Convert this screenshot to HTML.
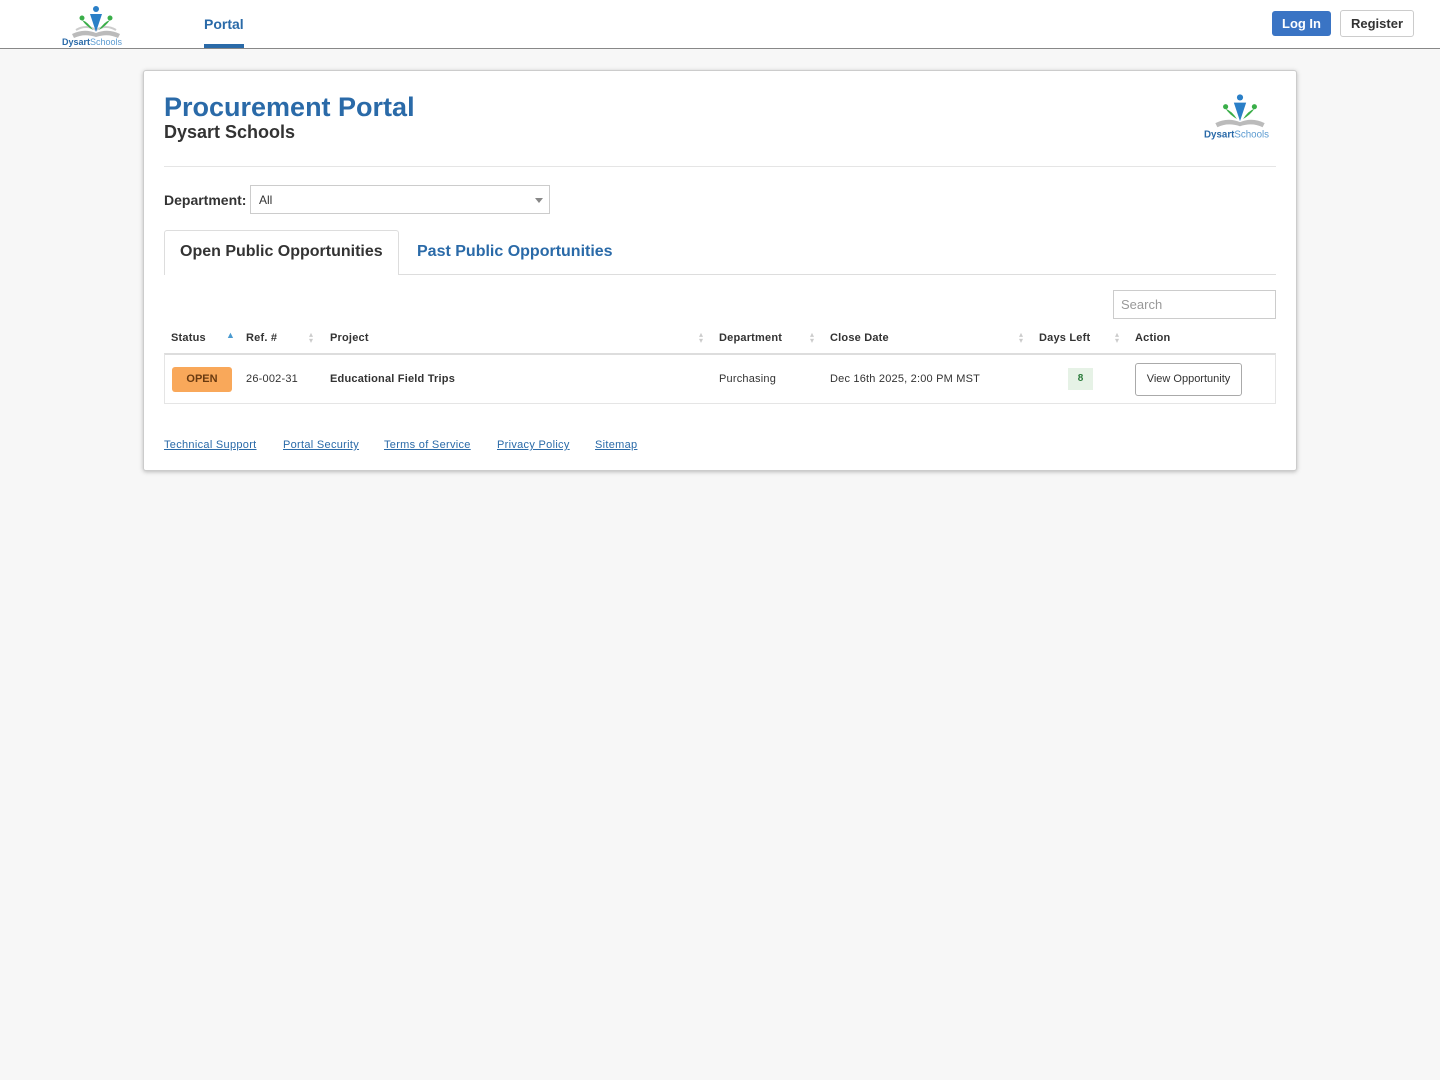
<!DOCTYPE html>
<html><head><meta charset="utf-8"><style>
*{box-sizing:border-box}
body{margin:0;background:#f7f7f7;font-family:"Liberation Sans",sans-serif;color:#333;width:1440px;height:1080px;position:relative;overflow:hidden}
.top{position:absolute;left:0;top:0;width:1440px;height:49px;background:#fff;border-bottom:1px solid #888}
.abs{position:absolute}
.card{position:absolute;left:143px;top:70px;width:1154px;height:401px;background:#fff;border:1px solid #ccc;border-radius:3px;box-shadow:0 1px 4px rgba(0,0,0,.25)}
.th{position:absolute;top:332px;font-size:11px;font-weight:bold;color:#333;letter-spacing:.2px}
.td{position:absolute;top:373px;font-size:11px;color:#333;letter-spacing:.2px}
.sort{position:absolute;top:332px;font-size:8px;color:#ccc;line-height:6px}
.ft{position:absolute;top:439px;font-size:11px;color:#2a6aa8;text-decoration:underline;letter-spacing:.3px}
</style></head><body>
<div class="top"></div>
<svg class="abs" style="left:60px;top:0" width="72" height="48" viewBox="0 0 72 48">
<path d="M12 34 Q24 28 36 33 Q48 28 60 34 L58 38 Q48 33 36 37 Q24 33 14 38Z" fill="#bbb"/>
<path d="M16 30 Q26 24 36 30 Q46 24 56 30" stroke="#ccc" stroke-width="2" fill="none"/>
<path d="M30 14 L36 32 L42 14 Z" fill="#2a7fc7"/>
<circle cx="36" cy="9" r="3" fill="#2a7fc7"/>
<path d="M22 20 Q28 22 33 30 Q26 26 22 20Z" fill="#3aae49"/><circle cx="22" cy="18" r="2.5" fill="#3aae49"/>
<path d="M50 20 Q44 22 39 30 Q46 26 50 20Z" fill="#3aae49"/><circle cx="50" cy="18" r="2.5" fill="#3aae49"/>
<text x="2" y="45" font-family="Liberation Sans" font-size="9" font-weight="bold" fill="#2a6aa8">Dysart<tspan font-weight="normal" fill="#5a9ad0">Schools</tspan></text>
</svg>
<div class="abs" style="left:204px;top:16px;font-size:14px;font-weight:bold;color:#2a6aa8">Portal</div>
<div class="abs" style="left:204px;top:44px;width:40px;height:4px;background:#2a6aa8"></div>
<div class="abs" style="left:1272px;top:11px;width:59px;height:25px;background:#3a74c4;border-radius:3px;color:#fff;font-size:13px;font-weight:bold;text-align:center;line-height:25px">Log In</div>
<div class="abs" style="left:1340px;top:10px;width:74px;height:27px;background:#fff;border:1px solid #ccc;border-radius:3px;color:#333;font-size:13px;font-weight:bold;text-align:center;line-height:25px">Register</div>

<div class="card"></div>
<div class="abs" style="left:164px;top:92px;font-size:27px;font-weight:bold;color:#2a6aa8">Procurement Portal</div>
<div class="abs" style="left:164px;top:122px;font-size:18px;font-weight:bold;color:#333">Dysart Schools</div>
<svg class="abs" style="left:1203px;top:90px" width="74" height="54" viewBox="0 0 72 48">
<path d="M12 30 Q24 24 36 29 Q48 24 60 30 L58 34 Q48 29 36 33 Q24 29 14 34Z" fill="#bbb"/>
<path d="M30 10 L36 28 L42 10 Z" fill="#2a7fc7"/>
<circle cx="36" cy="5" r="3" fill="#2a7fc7"/>
<path d="M22 16 Q28 18 33 26 Q26 22 22 16Z" fill="#3aae49"/><circle cx="22" cy="14" r="2.5" fill="#3aae49"/>
<path d="M50 16 Q44 18 39 26 Q46 22 50 16Z" fill="#3aae49"/><circle cx="50" cy="14" r="2.5" fill="#3aae49"/>
<text x="1" y="44" font-family="Liberation Sans" font-size="9.5" font-weight="bold" fill="#2a6aa8">Dysart<tspan font-weight="normal" fill="#5a9ad0">Schools</tspan></text>
</svg>
<div class="abs" style="left:164px;top:166px;width:1112px;height:1px;background:#e5e5e5"></div>
<div class="abs" style="left:164px;top:192px;font-size:14px;font-weight:bold;color:#333">Department:</div>
<div class="abs" style="left:250px;top:185px;width:300px;height:29px;border:1px solid #ccc;background:#fff;font-size:12px;padding:7px 8px">All</div>
<div class="abs" style="left:535px;top:198px;border-left:4px solid transparent;border-right:4px solid transparent;border-top:5px solid #888"></div>

<div class="abs" style="left:164px;top:274px;width:1112px;height:1px;background:#ddd"></div>
<div class="abs" style="left:164px;top:230px;width:235px;height:45px;background:#fff;border:1px solid #ddd;border-bottom:none;border-radius:3px 3px 0 0;font-size:16px;font-weight:bold;color:#333;padding:12px 0 0 15px">Open Public Opportunities</div>
<div class="abs" style="left:417px;top:243px;font-size:16px;font-weight:bold;color:#2a6aa8">Past Public Opportunities</div>

<div class="abs" style="left:1113px;top:290px;width:163px;height:29px;border:1px solid #ccc;font-size:13px;color:#999;padding:6px 7px">Search</div>

<div class="th" style="left:171px">Status</div><div class="abs" style="left:226px;top:330px;font-size:9px;color:#4a9ad0">▲</div>
<div class="th" style="left:246px">Ref. #</div><div class="sort" style="left:309px">▴<br>▾</div>
<div class="th" style="left:330px">Project</div><div class="sort" style="left:699px">▴<br>▾</div>
<div class="th" style="left:719px">Department</div><div class="sort" style="left:810px">▴<br>▾</div>
<div class="th" style="left:830px">Close Date</div><div class="sort" style="left:1019px">▴<br>▾</div>
<div class="th" style="left:1039px">Days Left</div><div class="sort" style="left:1115px">▴<br>▾</div>
<div class="th" style="left:1135px">Action</div>
<div class="abs" style="left:164px;top:353px;width:1112px;height:51px;border:1px solid #e5e5e5;border-top:2px solid #ddd"></div>
<div class="abs" style="left:172px;top:367px;width:60px;height:25px;background:#f9a85a;border-radius:3px;font-size:11px;font-weight:bold;color:#6a3a10;text-align:center;line-height:25px">OPEN</div>
<div class="td" style="left:246px">26-002-31</div>
<div class="td" style="left:330px;font-weight:bold">Educational Field Trips</div>
<div class="td" style="left:719px">Purchasing</div>
<div class="td" style="left:830px">Dec 16th 2025, 2:00 PM MST</div>
<div class="abs" style="left:1068px;top:368px;width:25px;height:22px;background:#e6f2e6;font-size:10px;font-weight:bold;color:#2a7a3a;text-align:center;line-height:22px">8</div>
<div class="abs" style="left:1135px;top:363px;width:107px;height:33px;border:1px solid #aaa;border-radius:3px;font-size:11px;text-align:center;line-height:31px;color:#333">View Opportunity</div>

<div class="ft" style="left:164px">Technical Support</div>
<div class="ft" style="left:283px">Portal Security</div>
<div class="ft" style="left:384px">Terms of Service</div>
<div class="ft" style="left:497px">Privacy Policy</div>
<div class="ft" style="left:595px">Sitemap</div>
</body></html>
